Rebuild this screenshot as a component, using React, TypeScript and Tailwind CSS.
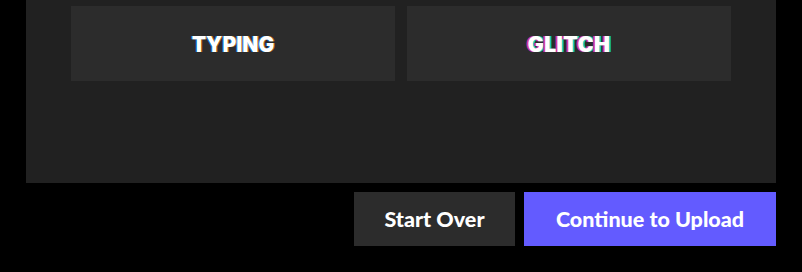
export default function App() {
  return (
    <div className="h-[272px] w-[802px] overflow-hidden bg-black font-['Lato',sans-serif]">
      <div className="ml-[26px] h-[183px] w-[750px] bg-[#212121] px-[45px] pt-[6px]">
        <div className="grid grid-cols-2 gap-[12px]">
          <button className="flex h-[75px] items-center justify-center bg-[#2c2c2c] pt-[3px] font-['Inter',sans-serif] text-[21px] font-black tracking-[0px] text-white [text-shadow:-1px_0_0_rgba(0,140,255,0.7),1px_0_0_rgba(255,140,0,0.6)]">
            TYPING
          </button>
          <button className="flex h-[75px] items-center justify-center bg-[#2c2c2c] pt-[3px] font-['Inter',sans-serif] text-[21px] font-black tracking-[0.6px] text-white [text-shadow:-2px_0_0_#d4389c,2px_0_0_#1cc8b8]">
            GLITCH
          </button>
        </div>
      </div>
      <div className="mt-[9px] flex w-[776px] justify-end gap-[9px]">
        <button className="h-[54px] w-[161px] bg-[#2c2c2c] text-[21.5px] font-black text-white">
          Start Over
        </button>
        <button className="h-[54px] w-[252px] bg-[#635bff] text-[21.5px] font-black text-white">
          Continue to Upload
        </button>
      </div>
    </div>
  );
}
